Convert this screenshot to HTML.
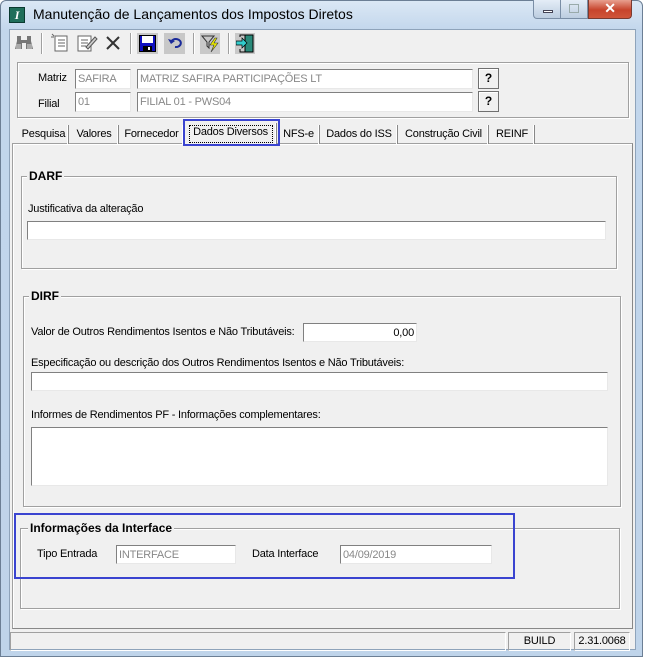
<!DOCTYPE html>
<html><head><meta charset="utf-8"><style>
*{box-sizing:border-box;margin:0;padding:0}
body{width:647px;height:660px;background:#fff;position:relative;overflow:hidden;font-family:"Liberation Sans",sans-serif;font-size:11px;letter-spacing:-0.2px;color:#000}
.a{position:absolute}
.win{left:0;top:0;width:643px;height:657px;background:linear-gradient(#dbe8f5,#c2d6ec 30px,#bfd4ea);border:1px solid #6c7f95;border-radius:6px 6px 0 0}
.client{left:9px;top:29px;width:627px;height:621px;background:#f0f0f0;border:1px solid #8ea3ba}
.inp{background:#fff;border-top:1px solid #808080;border-left:1px solid #808080;border-right:1px solid #e8e8e8;border-bottom:1px solid #e8e8e8;color:#888;padding:1px 2px;line-height:16px;white-space:nowrap;overflow:hidden}
.grp{border:1px solid #a0a0a0;box-shadow:1px 1px 0 #fff inset,1px 1px 0 #fff}
.gt{background:#f0f0f0;font-weight:bold;padding:0 2px;font-size:12px;letter-spacing:0}
.tab{top:125px;height:19px;line-height:18px;text-align:center;border-right:1px solid #888;box-shadow:-1px 0 0 #fff inset}
.btn{width:21px;height:21px;background:#f0f0f0;border:1px solid #707070;box-shadow:1px 1px 0 #fff inset;font-weight:bold;text-align:center;line-height:19px;font-size:12px}
.sep{top:33px;width:2px;height:21px;border-left:1px solid #a0a0a0;border-right:1px solid #fff}
</style></head><body>
<div class="a win"></div>
<div class="a" style="left:9px;top:7px;width:16px;height:16px;background:#1f6e5a;border:1px solid #0a3a30;color:#fff;font-weight:bold;font-size:12px;line-height:14px;text-align:center;font-family:'Liberation Serif',serif;font-style:italic">I</div>
<div class="a" style="left:33px;top:6px;font-size:14px;letter-spacing:0;color:#000">Manutenção de Lançamentos dos Impostos Diretos</div>
<div class="a" style="left:533px;top:0;width:28px;height:19px;background:linear-gradient(#e4edf7,#bccde0);border:1px solid #7a8ea6;border-top:none;border-radius:0 0 0 4px"><div class="a" style="left:9px;top:10px;width:10px;height:3px;background:#fff;border:1px solid #445"></div></div>
<div class="a" style="left:561px;top:0;width:27px;height:19px;background:linear-gradient(#e4edf7,#bccde0);border:1px solid #7a8ea6;border-top:none;border-left:none"><div class="a" style="left:8px;top:4px;width:10px;height:9px;border:1px solid #9aa;"></div></div>
<div class="a" style="left:588px;top:0;width:44px;height:19px;background:linear-gradient(#e8a08f,#c7442c 55%,#d0553a);border:1px solid #7a3a30;border-top:none;border-radius:0 0 4px 0;color:#fff;font-weight:bold;font-size:14px;text-align:center;line-height:17px">✕</div>
<div class="a client"></div>
<!-- toolbar -->
<svg class="a" style="left:14px;top:35px" width="20" height="16"><path d="M3 1h4v4h6V1h4v5l2 8h-7V8H8v6H1l2-8z" fill="#777"/><rect x="2" y="9" width="5" height="5" fill="#aaa"/><rect x="13" y="9" width="5" height="5" fill="#aaa"/></svg>
<div class="a sep" style="left:41px"></div>
<svg class="a" style="left:50px;top:33px" width="20" height="20"><rect x="5" y="3" width="12" height="15" fill="#fff" stroke="#666"/><path d="M8 7h7M8 10h7M8 13h7" stroke="#666"/><path d="M1 4l3 0M2 1l2 2" stroke="#666"/></svg>
<svg class="a" style="left:76px;top:33px" width="22" height="20"><rect x="2" y="3" width="13" height="15" fill="#fff" stroke="#666"/><path d="M5 7h7M5 10h7M5 13h5" stroke="#666"/><path d="M10 14l9-10 2 2-9 10z" fill="#ccc" stroke="#555"/></svg>
<svg class="a" style="left:105px;top:35px" width="16" height="16"><path d="M2 2l12 12M14 2L2 14" stroke="#333" stroke-width="2"/></svg>
<div class="a sep" style="left:130px"></div>
<div class="a" style="left:137px;top:33px;width:21px;height:21px;background:#c8c8c8"></div>
<svg class="a" style="left:139px;top:35px" width="17" height="17"><rect x="0.5" y="0.5" width="16" height="16" fill="#1010c0" stroke="#000"/><rect x="3" y="1" width="11" height="7" fill="#fff"/><rect x="4" y="11" width="9" height="5" fill="#000"/><rect x="9" y="12" width="2" height="3" fill="#fff"/></svg>
<div class="a" style="left:164px;top:33px;width:21px;height:21px;background:#c8c8c8"></div>
<svg class="a" style="left:167px;top:36px" width="16" height="14"><path d="M4 6a5 4 0 1 1 4 5" stroke="#1a2a9a" stroke-width="2" fill="none"/><path d="M1 3l3 5 4-3z" fill="#1a2a9a"/></svg>
<div class="a sep" style="left:193px"></div>
<div class="a" style="left:200px;top:33px;width:20px;height:21px;background:#c8c8c8"></div>
<svg class="a" style="left:201px;top:34px" width="19" height="19"><path d="M1 2h12l-5 6v6l-2-2V8z" fill="none" stroke="#333"/><path d="M14 4l-5 7h4l-3 7 7-9h-4l3-5z" fill="#ee0" stroke="#333" stroke-width=".6"/></svg>
<div class="a sep" style="left:228px"></div>
<div class="a" style="left:235px;top:33px;width:20px;height:21px;background:#c8c8c8"></div>
<svg class="a" style="left:236px;top:34px" width="19" height="19"><rect x="9" y="1" width="8" height="17" fill="#2a8a7a" stroke="#000"/><path d="M0 7h6V4l5 5-5 5v-3H0z" fill="#3cc" stroke="#000" stroke-width=".7"/><path d="M4 3V1h5M4 15v3h5" stroke="#000" fill="none"/></svg>
<!-- header group -->
<div class="a grp" style="left:17px;top:62px;width:612px;height:56px"></div>
<div class="a" style="left:38px;top:72px">Matriz</div>
<div class="a inp" style="left:75px;top:69px;width:56px;height:20px">SAFIRA</div>
<div class="a inp" style="left:137px;top:69px;width:336px;height:20px">MATRIZ SAFIRA PARTICIPAÇÕES LT</div>
<div class="a btn" style="left:478px;top:68px">?</div>
<div class="a" style="left:38px;top:98px">Filial</div>
<div class="a inp" style="left:75px;top:92px;width:56px;height:20px">01</div>
<div class="a inp" style="left:137px;top:92px;width:336px;height:20px">FILIAL 01 - PWS04</div>
<div class="a btn" style="left:478px;top:91px">?</div>
<!-- tabs -->
<div class="a" style="left:12px;top:143px;width:621px;height:486px;border:1px solid #a0a0a0;border-right-color:#888;border-bottom-color:#888;box-shadow:1px 1px 0 #fff inset"></div>
<div class="a tab" style="left:19px;width:50px">Pesquisa</div>
<div class="a tab" style="left:70px;width:49px">Valores</div>
<div class="a tab" style="left:120px;width:64px">Fornecedor</div>
<div class="a tab" style="left:185px;width:92px;background:#f0f0f0;top:123px;height:21px">Dados Diversos</div>
<div class="a" style="left:189px;top:125px;width:84px;height:18px;border:1px dotted #000"></div>
<div class="a" style="left:183px;top:119px;width:97px;height:27px;border:2px solid #3a44d0"></div>
<div class="a tab" style="left:278px;width:42px">NFS-e</div>
<div class="a tab" style="left:321px;width:77px">Dados do ISS</div>
<div class="a tab" style="left:399px;width:90px">Construção Civil</div>
<div class="a tab" style="left:490px;width:45px">REINF</div>
<!-- DARF -->
<div class="a grp" style="left:21px;top:176px;width:596px;height:93px"></div>
<div class="a gt" style="left:27px;top:169px">DARF</div>
<div class="a" style="left:28px;top:203px">Justificativa da alteração</div>
<div class="a inp" style="left:27px;top:221px;width:579px;height:19px"></div>
<!-- DIRF -->
<div class="a grp" style="left:23px;top:296px;width:598px;height:211px"></div>
<div class="a gt" style="left:29px;top:289px">DIRF</div>
<div class="a" style="left:31px;top:326px">Valor de Outros Rendimentos Isentos e Não Tributáveis:</div>
<div class="a inp" style="left:303px;top:323px;width:114px;height:19px;color:#000;text-align:right">0,00</div>
<div class="a" style="left:31px;top:357px">Especificação ou descrição dos Outros Rendimentos Isentos e Não Tributáveis:</div>
<div class="a inp" style="left:31px;top:372px;width:577px;height:19px"></div>
<div class="a" style="left:31px;top:409px">Informes de Rendimentos PF -  Informações complementares:</div>
<div class="a inp" style="left:31px;top:427px;width:577px;height:59px"></div>
<!-- Interface -->
<div class="a grp" style="left:20px;top:528px;width:600px;height:81px"></div>
<div class="a gt" style="left:28px;top:521px">Informações da Interface</div>
<div class="a" style="left:37px;top:548px">Tipo Entrada</div>
<div class="a inp" style="left:116px;top:545px;width:120px;height:19px">INTERFACE</div>
<div class="a" style="left:252px;top:548px">Data Interface</div>
<div class="a inp" style="left:340px;top:545px;width:152px;height:19px">04/09/2019</div>
<div class="a" style="left:14px;top:513px;width:501px;height:66px;border:2px solid #3a44d0"></div>
<!-- status -->
<div class="a" style="left:10px;top:632px;width:496px;height:19px;border:1px solid #a0a0a0;border-right-color:#fff;border-bottom-color:#fff"></div>
<div class="a" style="left:508px;top:632px;width:63px;height:19px;border:1px solid #a0a0a0;border-right-color:#fff;border-bottom-color:#fff;text-align:center;line-height:17px">BUILD</div>
<div class="a" style="left:574px;top:632px;width:56px;height:19px;border:1px solid #a0a0a0;border-right-color:#fff;border-bottom-color:#fff;text-align:center;line-height:17px">2.31.0068</div>
</body></html>
